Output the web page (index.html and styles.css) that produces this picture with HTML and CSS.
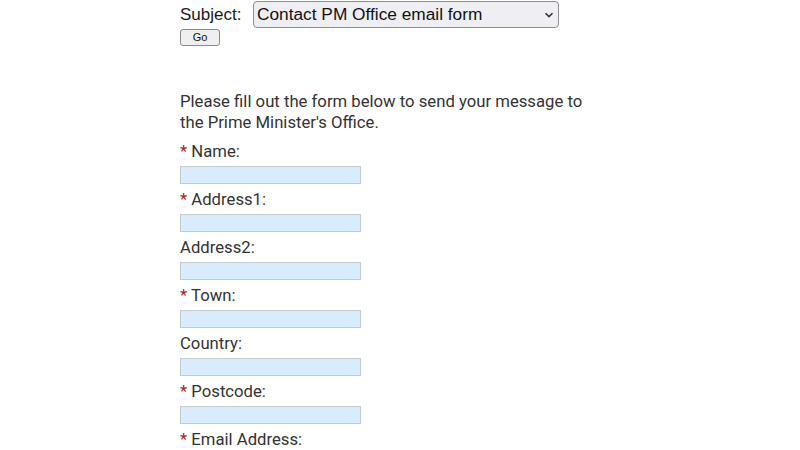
FILE: index.html
```html
<!DOCTYPE html>
<html>
<head>
<meta charset="utf-8">
<link rel="stylesheet" href="styles.css">
</head>
<body>
<div class="page">
  <form class="subject-form">
    <div class="subject-row">
      <label class="subject-label">Subject:</label>
      <div class="select">
        <span class="select-text">Contact PM Office email form</span>
        <svg class="chev" width="10" height="6" viewBox="0 0 10 6"><path d="M1.5 1.2 L5 4.6 L8.5 1.2" fill="none" stroke="#333" stroke-width="1.6"/></svg>
      </div>
    </div>
    <button type="button" class="go">Go</button>
  </form>

  <p class="intro">Please fill out the form below to send your message to the Prime Minister's Office.</p>

  <div class="fields">
    <div class="field"><div class="label"><span class="req">*</span> Name:</div><div class="input"></div></div>
    <div class="field"><div class="label"><span class="req">*</span> Address1:</div><div class="input"></div></div>
    <div class="field"><div class="label">Address2:</div><div class="input"></div></div>
    <div class="field"><div class="label"><span class="req">*</span> Town:</div><div class="input"></div></div>
    <div class="field"><div class="label">Country:</div><div class="input"></div></div>
    <div class="field"><div class="label"><span class="req">*</span> Postcode:</div><div class="input"></div></div>
    <div class="field"><div class="label"><span class="req">*</span> Email Address:</div><div class="input"></div></div>
  </div>
</div>
</body>
</html>
```
FILE: styles.css
```css
* { box-sizing: border-box; }
html, body { margin: 0; padding: 0; background: #fff; }
body { overflow: hidden; height: 450px; }
.page {
  padding: 1px 0 0 180px;
  font-family: Roboto, "Liberation Sans", sans-serif;
  color: #333;
}
.subject-form { display: flex; flex-direction: column; align-items: flex-start; }
.subject-row { display: flex; align-items: center; height: 27px; }
.subject-label {
  font-family: "Liberation Sans", Arial, sans-serif;
  font-size: 17px;
  color: #1a1a1a;
  width: 73px;
}
.select {
  width: 306px;
  height: 27px;
  border: 1px solid #8d8d95;
  border-radius: 4px;
  background: #efeff3;
  display: flex;
  align-items: center;
  justify-content: space-between;
  padding: 0 4px 0 3px;
}
.select-text {
  font-family: "Liberation Sans", Arial, sans-serif;
  font-size: 17.3px;
  color: #111;
}
.chev { margin-top: 1px; }
.go {
  margin: 1px 0 0 0;
  width: 40px;
  height: 17px;
  padding: 0;
  border: 1px solid #8a8a8a;
  border-radius: 3px;
  background: #efefef;
  font-family: "Liberation Sans", Arial, sans-serif;
  font-size: 11px;
  color: #111;
  line-height: 15px;
}
.intro {
  margin: 45px 0 0 0;
  width: 420px;
  font-size: 16.7px;
  line-height: 21px;
}
.fields { margin-top: 8px; display: flex; flex-direction: column; gap: 5px; }
.field { display: flex; flex-direction: column; gap: 4px; }
.label { font-size: 16.7px; line-height: 20px; padding-top: 1px; }
.req { color: #a42424; }
.input {
  width: 181px;
  height: 18px;
  background: #d7ecfc;
  border: 1px solid #c3ccd4;
}
```
